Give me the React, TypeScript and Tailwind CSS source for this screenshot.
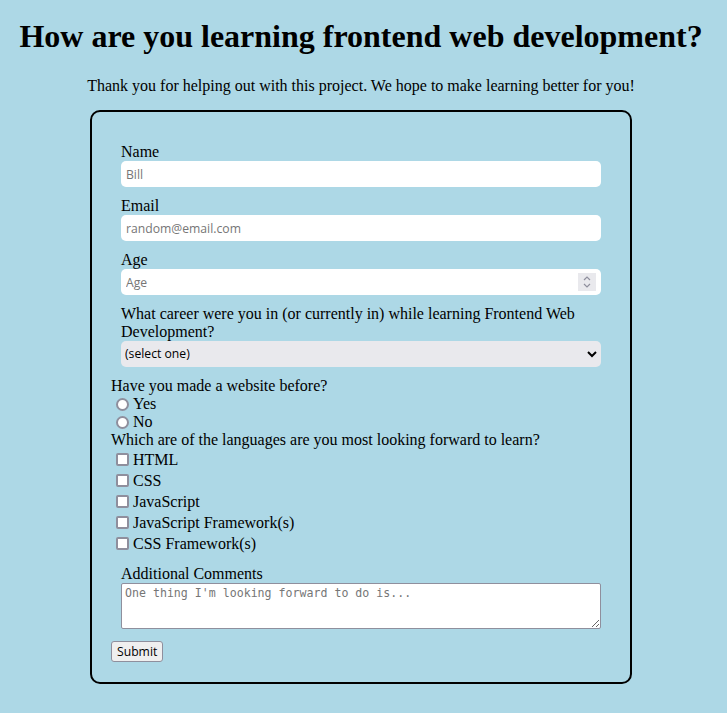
import React from "react";

const inputCls =
  "block w-[480px] h-[26px] bg-white rounded-[5px] px-[5px] text-[12.2px] text-black placeholder:text-[#767676] font-['Open_Sans','Liberation_Sans',Arial,sans-serif] outline-none";

const radioCls =
  "appearance-none ml-[5px] mr-[4px] w-[13px] h-[13px] rounded-full border-2 border-[#8f8f9d] bg-white shrink-0 checked:border-[4px] checked:border-[#0075ff]";

const checkCls =
  "appearance-none ml-[5px] mr-[4px] w-[13px] h-[13px] rounded-[2px] border-2 border-[#8f8f9d] bg-white shrink-0 checked:bg-[#0075ff] checked:border-[#0075ff]";

export default function App() {
  const langs = ["HTML", "CSS", "JavaScript", "JavaScript Framework(s)", "CSS Framework(s)"];
  return (
    <div className="min-h-screen bg-[#add8e6] text-black font-['Liberation_Serif','Times_New_Roman',serif]">
      <div className="w-[722px] pt-[18px] pb-[28px]">
        <h1 className="text-center text-[32px] font-bold leading-[37px]">
          How are you learning frontend web development?
        </h1>
        <p className="mt-[22px] text-center text-[16px] leading-[18px]">
          Thank you for helping out with this project. We hope to make learning better for you!
        </p>
        <form
          className="mt-[15px] ml-[90px] w-[542px] border-2 border-black rounded-[10px] px-[19px] pt-[20px] pb-[20px] text-[16px] leading-[18px]"
          onSubmit={(e) => e.preventDefault()}
        >
          <div className="mt-[11px] ml-[10px]">
            <label className="block">Name</label>
            <input className={inputCls} type="text" placeholder="Bill" />
          </div>
          <div className="mt-[10px] ml-[10px]">
            <label className="block">Email</label>
            <input className={inputCls} type="text" placeholder="random@email.com" />
          </div>
          <div className="mt-[10px] ml-[10px]">
            <label className="block">Age</label>
            <div className="relative w-[480px]">
              <input className={inputCls} type="text" placeholder="Age" />
              <div className="absolute left-[457px] top-[4px] w-[18px] h-[18px] bg-[#e9e9ed] flex items-center justify-center">
                <svg width="10" height="14" viewBox="0 0 10 14" fill="none" stroke="#8f8f9d" strokeWidth="1.2">
                  <polyline points="2,5 5,2 8,5" />
                  <polyline points="2,9 5,12 8,9" />
                </svg>
              </div>
            </div>
          </div>
          <div className="mt-[10px] ml-[10px]">
            <label className="block w-[480px]">
              What career were you in (or currently in) while learning Frontend Web Development?
            </label>
            <div className="relative w-[480px]">
              <select className="block appearance-none w-[480px] h-[26px] bg-[#e9e9ed] rounded-[5px] pl-[4px] text-[12.2px] text-black font-['Open_Sans','Liberation_Sans',Arial,sans-serif] outline-none">
                <option>(select one)</option>
                <option>Student</option>
                <option>Full-time job</option>
                <option>Part-time job</option>
                <option>Other</option>
              </select>
              <svg
                className="absolute left-[466px] top-[10px] pointer-events-none"
                width="10"
                height="7"
                viewBox="0 0 10 7"
                fill="none"
                stroke="#000"
                strokeWidth="2"
              >
                <polyline points="1,1 5,5 9,1" />
              </svg>
            </div>
          </div>
          <div className="mt-[10px]">
            <div>Have you made a website before?</div>
            <label className="flex items-center h-[18px]">
              <input type="radio" name="made" className={radioCls} />
              Yes
            </label>
            <label className="flex items-center h-[18px]">
              <input type="radio" name="made" className={radioCls} />
              No
            </label>
          </div>
          <div>
            <div>Which are of the languages are you most looking forward to learn?</div>
            {langs.map((l) => (
              <label key={l} className="flex items-center h-[21px]">
                <input type="checkbox" className={checkCls} />
                {l}
              </label>
            ))}
          </div>
          <div className="mt-[11px] ml-[10px]">
            <label className="block">Additional Comments</label>
            <textarea
              className="block w-[480px] h-[46px] bg-white border border-[#8f8f9d] rounded-[2px] px-[3px] py-[2px] text-[11.6px] leading-[15px] font-['DejaVu_Sans_Mono','Liberation_Mono',monospace] placeholder:text-[#767676] outline-none"
              placeholder="One thing I'm looking forward to do is..."
            />
          </div>
          <button
            type="submit"
            className="block mt-[12px] h-[21px] px-[5px] bg-[#efefef] border border-[#8f8f9d] rounded-[3px] text-[12.2px] leading-[17px] text-black font-['Open_Sans','Liberation_Sans',Arial,sans-serif]"
          >
            Submit
          </button>
        </form>
      </div>
    </div>
  );
}
